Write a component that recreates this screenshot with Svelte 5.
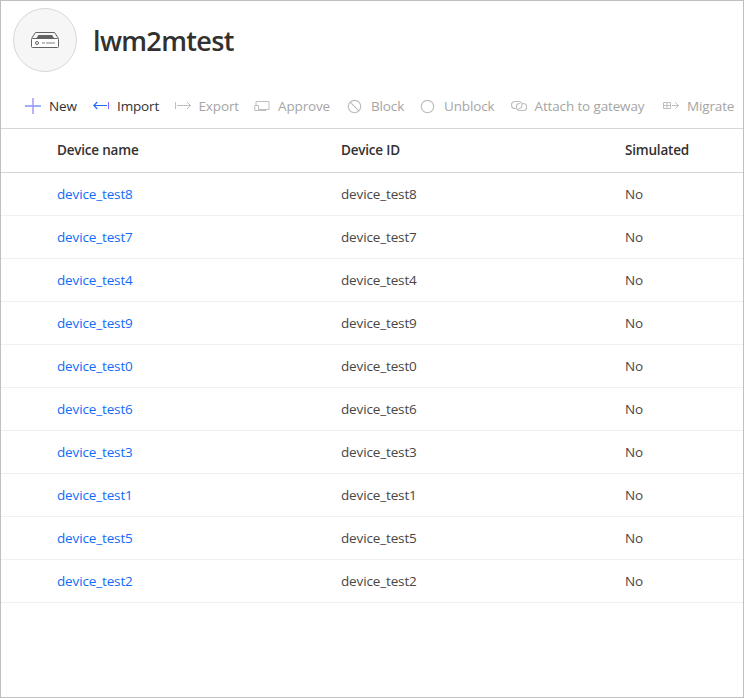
<script>
  const actions = [
    { id: 'new', label: 'New', width: 28, enabled: true },
    { id: 'import', label: 'Import', width: 41.5, enabled: true },
    { id: 'export', label: 'Export', width: 39.5, enabled: false },
    { id: 'approve', label: 'Approve', width: 53, enabled: false },
    { id: 'block', label: 'Block', width: 33, enabled: false },
    { id: 'unblock', label: 'Unblock', width: 50.5, enabled: false },
    { id: 'attach', label: 'Attach to gateway', width: 112.5, enabled: false },
    { id: 'migrate', label: 'Migrate', width: 48, enabled: false }
  ];
  const devices = [8, 7, 4, 9, 0, 6, 3, 1, 5, 2].map((n) => `device_test${n}`);
</script>

<main>
  <header>
    <div class="avatar">
      <svg width="30" height="18" viewBox="0 0 30 18" fill="none" stroke="#626262">
        <path d="M1.5 7.5 5.5 1.5H24.5L28.5 7.5" />
        <rect x="1.5" y="7.5" width="27" height="9" rx="1" fill="#fff" />
        <path d="M8.5 4H22L24 7H6.5Z" fill="#626262" stroke="none" />
        <circle cx="7" cy="12" r="1.5" />
        <path d="M12 12h3M16 12h9" stroke="#aaa" stroke-width="1.6" />
      </svg>
    </div>
    <h1>lwm2mtest</h1>
  </header>

  <nav>
    {#each actions as action}
      <button class:enabled={action.enabled} disabled={!action.enabled}>
        <svg width="16" height="16" viewBox="0 0 16 16" fill="none" stroke="currentColor">
          {#if action.id === 'new'}
            <path d="M0 8H16" stroke="#8195fb" stroke-width="1.5" />
            <path d="M8 0V16" stroke="#a894ff" stroke-width="1.5" />
          {:else if action.id === 'import'}
            <path d="M14 7.5H.8M4.3 4 .8 7.5 4.3 11" stroke="#256bf5" stroke-width="1.2" />
            <path d="M15.5 4V11" stroke="#8a63ff" />
          {:else if action.id === 'export'}
            <path d="M.5 4V11M2 7.5H15.5M12 4l3.5 3.5L12 11" />
          {:else if action.id === 'approve'}
            <path d="M2 7V3.5H15V11.5H5M.8 7.5H4.5V12.5H.8ZM5 12.5h7M9.5 11.5v1" />
          {:else if action.id === 'block'}
            <circle cx="7.5" cy="8.5" r="6.2" stroke-width="1.2" />
            <path d="M3.2 4.2 11.8 12.8" stroke-width="1.2" />
          {:else if action.id === 'unblock'}
            <circle cx="7.5" cy="8.5" r="6.2" stroke-width="1.2" />
          {:else if action.id === 'attach'}
            <path d="M4.8 10.5H4A3.3 3.3 0 0 1 4 3.5H7.5A3.5 3.5 0 0 1 7.5 10.5" stroke-width="1.2" />
            <path d="M11.5 5.5H12.2A3.4 3.4 0 0 1 12.2 12.5H8.8A3.5 3.5 0 0 1 8.8 5.5" stroke-width="1.2" />
          {:else}
            <path d="M.5 4.5H7.5V10.5H.5ZM.5 7.5H7.5M4 4.5V10.5M9 7.5H15.5M12.3 4.3l3.2 3.2-3.2 3.2" />
          {/if}
        </svg>
        <span style:width="{action.width}px">{action.label}</span>
      </button>
    {/each}
  </nav>

  <div class="table">
    <div class="row head">
      <span>Device name</span><span>Device ID</span><span>Simulated</span>
    </div>
    {#each devices as device}
      <div class="row">
        <span class="link">{device}</span><span>{device}</span><span>No</span>
      </div>
    {/each}
  </div>
</main>

<style>
  main {
    box-sizing: border-box;
    width: 744px;
    height: 698px;
    border: 1px solid #bfbfbf;
    background: #fff;
    overflow: hidden;
    font: 13.5px 'Open Sans', 'Noto Sans', sans-serif;
    letter-spacing: -0.14px;
    color: #323130;
  }
  header {
    display: flex;
    align-items: center;
    gap: 16px;
    height: 71px;
    padding: 7px 12px 0;
    box-sizing: border-box;
  }
  .avatar {
    display: flex;
    align-items: center;
    justify-content: center;
    box-sizing: border-box;
    width: 64px;
    height: 64px;
    border: 1px solid #d8d8d8;
    border-radius: 50%;
    background: #f6f6f6;
  }
  h1 {
    margin: 0;
    padding-top: 2px;
    font-size: 27px;
    line-height: 36px;
    font-weight: 600;
    letter-spacing: -0.65px;
  }
  nav {
    display: flex;
    align-items: center;
    gap: 16px;
    height: 57px;
    padding: 12px 0 0 24px;
    box-sizing: border-box;
    border-bottom: 1px solid #d6d6d6;
  }
  button {
    display: flex;
    flex: none;
    align-items: center;
    gap: 8px;
    padding: 0;
    border: 0;
    background: none;
    font: inherit;
    letter-spacing: inherit;
    line-height: 20px;
    color: #a6a5a4;
    text-align: left;
  }
  button.enabled { color: #323130; }
  button svg { flex: none; color: #c0bebc; }
  button span { white-space: nowrap; }
  .row {
    display: grid;
    grid-template-columns: 284px 284px 1fr;
    align-items: center;
    box-sizing: border-box;
    height: 43px;
    padding-left: 56px;
    border-bottom: 1px solid #f0f0f0;
    line-height: 20px;
    color: #484644;
  }
  .head {
    height: 44px;
    padding-bottom: 1px;
    border-color: #d6d6d6;
    font-weight: 600;
    letter-spacing: -0.2px;
    color: #323130;
  }
  .link { color: #136bfb; }
</style>
